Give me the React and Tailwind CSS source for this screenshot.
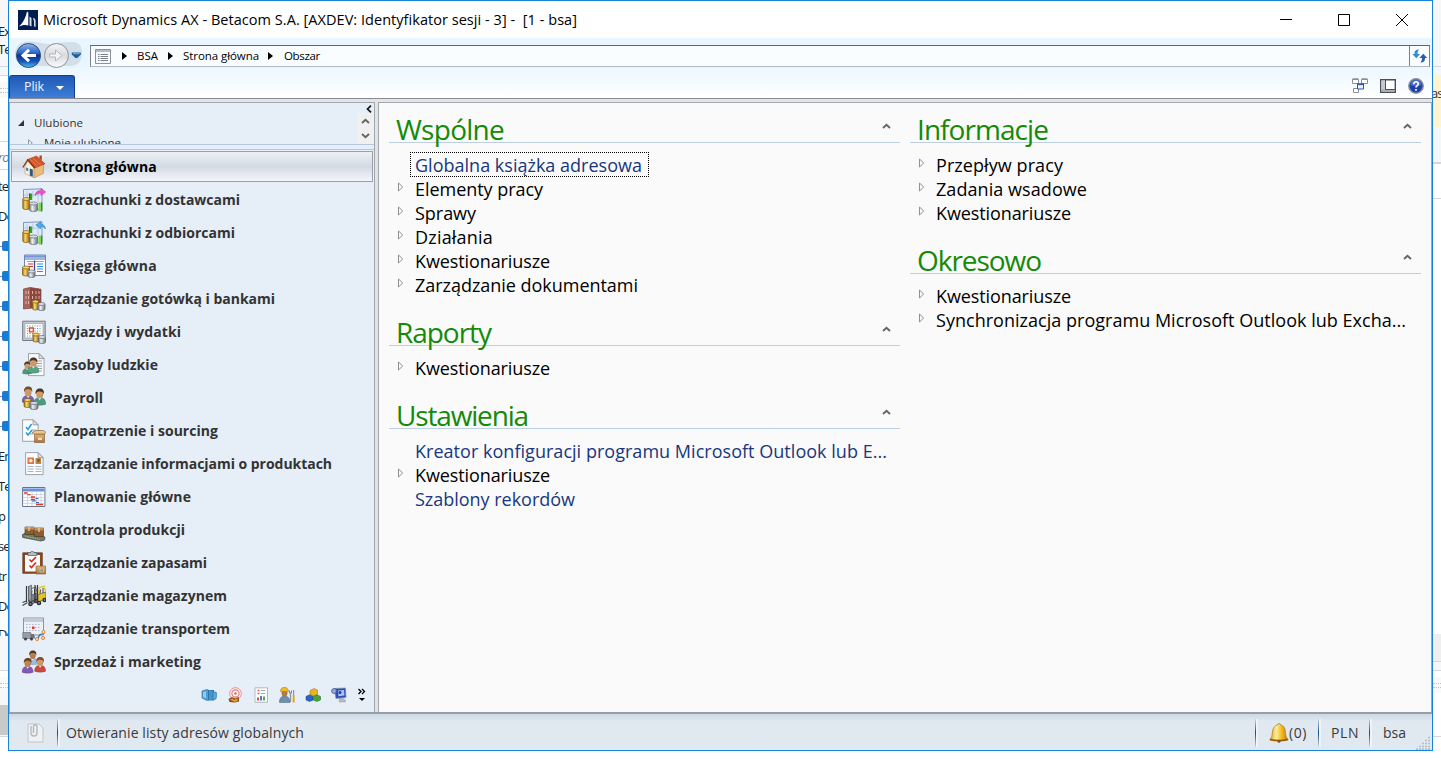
import React, { useLayoutEffect, useRef, useState } from "react";

// Text tracked so that it fills a given width.
function T({ w, className = "", children }) {
  const ref = useRef(null);
  const [ls, setLs] = useState(0);
  useLayoutEffect(() => {
    const natural = ref.current.getBoundingClientRect().width;
    setLs((w - natural) / children.length);
  }, []);
  return (
    <span ref={ref} className={"inline-block whitespace-pre " + className} style={{ letterSpacing: ls }}>
      {children}
    </span>
  );
}

/* ---------- icon parts ---------- */
function Defs() {
  return (
    <svg className="absolute h-0 w-0" aria-hidden="true">
      <defs>
        <linearGradient id="gold"><stop offset="0" stopColor="#9a6a16" /><stop offset=".35" stopColor="#fbd968" /><stop offset="1" stopColor="#94640e" /></linearGradient>
        <linearGradient id="silver"><stop offset="0" stopColor="#70757f" /><stop offset=".35" stopColor="#f0f1f5" /><stop offset="1" stopColor="#70757f" /></linearGradient>
        <linearGradient id="blueball" x2="0" y2="1"><stop offset="0" stopColor="#8fb9ee" /><stop offset=".4" stopColor="#2a62c6" /><stop offset=".5" stopColor="#0a3392" /><stop offset=".75" stopColor="#1458b8" /><stop offset="1" stopColor="#4fc0fb" /></linearGradient>
        <linearGradient id="greyball" x2="0" y2="1"><stop offset="0" stopColor="#f4f5f6" /><stop offset=".5" stopColor="#d9dcdf" /><stop offset="1" stopColor="#fbfbfb" /></linearGradient>
        <linearGradient id="box" x2="0" y2="1"><stop offset="0" stopColor="#e2b679" /><stop offset="1" stopColor="#a8733c" /></linearGradient>
        <linearGradient id="bell"><stop offset="0" stopColor="#e09a14" /><stop offset=".35" stopColor="#fff09a" /><stop offset=".65" stopColor="#f3b81f" /><stop offset="1" stopColor="#b87809" /></linearGradient>
      </defs>
    </svg>
  );
}
const Cyl = ({ x, y, w = 6, h = 8, silver }) => (
  <g stroke={silver ? "#5f6470" : "#80560e"} strokeWidth=".7">
    <path d={`M${x} ${y + 1.5}v${h - 3}a${w / 2} 1.5 0 0 0 ${w} 0v${3 - h}`} fill={silver ? "url(#silver)" : "url(#gold)"} />
    <ellipse cx={x + w / 2} cy={y + 1.5} rx={w / 2} ry="1.5" fill={silver ? "#dcdfe6" : "#f8d566"} />
  </g>
);
const Person = ({ x, y, s = 1, hair = "#4a3524", body = "#4a9a78", skin = "#cf9a6a" }) => (
  <g transform={`translate(${x} ${y}) scale(${s})`}>
    <path d="M0 14c0-4 2-6 5.500-6s5.500 2 5.500 6c-3 1.300-8 1.300-11 0z" fill={body} stroke="#00000050" strokeWidth=".5" />
    <path d="M4 8l1.500 2.500L7.300 8z" fill="#eef3f8" />
    <ellipse cx="5.500" cy="5" rx="3.100" ry="3.900" fill={skin} />
    <path d="M6.500 1.500c2 1 2.300 4.500 0 7 3-1 3-6 0-7z" fill="#00000028" />
    <path d="M1.900 5.200C1.300 1.800 3.300 0 5.700 0s4.200 1.600 3.500 5.200c-.6-2-1.400-2.600-3.500-2.600-1.900 0-3 .5-3.800 2.600z" fill={hair} />
  </g>
);
const Page = ({ x, y, w, h }) => (
  <g stroke="#8a8d94" strokeWidth=".8">
    <path d={`M${x} ${y}h${w - 5}l5 5v${h - 5}h${-w}z`} fill="#fbfcfd" />
    <path d={`M${x + w - 5} ${y}v5h5z`} fill="#dde1e6" />
  </g>
);
const Chart = ({ arrow }) => (
  <>
    <path d="M1.500 1.500L20 .8v21L1.500 19z" fill="#dfeafb" stroke="#6e8cbf" strokeWidth=".9" />
    <path d="M5 3v15M11 2.500V9M2 7h17M16 2.500V14" stroke="#a9c1e8" strokeWidth=".8" />
    <path d="M7 5.500h3.200V12H7z" fill="#3aa41e" /><path d="M7 5.500h1.200V12H7z" fill="#187008" />
    <path d="M16.500 14.500h3V23.500h-3z" fill="#7ed84a" /><path d="M19 14.500h1.300V23.500H19z" fill="#2f9314" />
    <Cyl x={0.800} y={9.500} w={6.700} h={12} /><Cyl x={7.500} y={14} w={8} h={9.500} silver />
    {arrow === "out" ? (
      <path d="M13 7.500c.5-3.500 2.500-5 6-5V.5l4.700 3.400L19 7.500V5.300c-2.500 0-4 .4-6 2.200z" fill="#f04fd0" stroke="#b328a0" strokeWidth=".5" />
    ) : (
      <path d="M23.500 8c-.5-3.500-2.500-5-5-5V.8L13.800 4l4.700 3.700V5.500c2 0 3.500.6 5 2.500z" fill="#4aaeea" stroke="#1c73b5" strokeWidth=".5" />
    )}
  </>
);
const Forklift = ({ x, y, c }) => (
  <g transform={`translate(${x} ${y})`}>
    <path d="M1 0v16M3.500 0v16" stroke="#34373c" strokeWidth="1.200" />
    <path d="M-3 19.500l5-3M-3 16.500l4-1.500" stroke="#45484e" strokeWidth="1.300" />
    <path d="M4 9.500l3-1 5-1.500v7L4 17z" fill={c} stroke="#34373c" strokeWidth=".6" />
    <path d="M4.500 8.500l.7-6 5-1.300 1.500 6" fill="none" stroke={c} strokeWidth="1.300" />
    <path d="M6 8.500l.5-4M9 3v5" stroke="#2d2f33" strokeWidth=".9" />
    <circle cx="5" cy="18" r="2.300" fill="#2d2f33" /><circle cx="5" cy="18" r=".8" fill="#b8bac0" />
    <circle cx="10.500" cy="15" r="2.200" fill="#2d2f33" /><circle cx="10.500" cy="15" r=".7" fill="#b8bac0" />
  </g>
);

const icons = {
  home: (
    <>
      <path d="M3 12L5.500 6l6.500 7v9.800L3 18.500z" fill="#faf0d9" stroke="#b08a55" strokeWidth=".5" />
      <path d="M12 12.500L21.500 8.500v9.800L12 23z" fill="#e6bd7c" stroke="#a67d42" strokeWidth=".5" />
      <path d="M5.500 4.500L14.500 1 23 8.800 12.800 13z" fill="#d5562b" stroke="#96290c" strokeWidth=".5" />
      <path d="M8 4.500l8 7M11 3.300l8 7" stroke="#ee8a5c" strokeWidth=".8" />
      <path d="M.8 12.500L5.800 4.800 12.600 13" fill="none" stroke="#8c2b10" strokeWidth="1.200" />
      <path d="M17.500.5h2.300v5l-2.300-2z" fill="#a34a2a" />
      <path d="M7.800 13.500l3 1v7.300l-3-1.400z" fill="#30567f" /><path d="M4 12.500l2.300.8v3L4 15.500z" fill="#5084b8" />
    </>
  ),
  vendors: <Chart arrow="out" />,
  customers: <Chart arrow="in" />,
  ledger: (
    <>
      <path d="M2.500 1h21v20.500h-21z" fill="#fdfdff" stroke="#6d86b8" />
      <path d="M3 1.500h20V6H3z" fill="#9fb6e0" /><path d="M3 1.500h20v1.300H3z" fill="#6f8fcd" /><path d="M5 7.500h17" stroke="#9aa7c2" />
      <path d="M12.500 6.500v14.500" stroke="#3b4b86" strokeWidth="1.300" />
      <path d="M6 10h5M6 12.500h5" stroke="#d03535" strokeWidth="1.200" />
      <path d="M15 10h6M15 12.500h6M15 15h6M15 17.500h6" stroke="#2f8ee0" strokeWidth="1.200" />
      <Cyl x={0.500} y={12} w={7} h={10} /><Cyl x={6} y={16} w={7} h={7.500} silver />
    </>
  ),
  bank: (
    <>
      <path d="M1.500 2L8 .5l11 1.700V21H11L1.500 22z" fill="#a9655a" stroke="#6c3129" strokeWidth=".6" />
      <path d="M8 .5l11 1.700V21H8z" fill="#8b463d" />
      <path d="M4 4v3M4 9v3M4 14v3M10.500 4v3M10.500 9v3M14 4v3M14 9v3M17 4v3M17 9v3M10.500 14v3M6.500 4v3M6.500 9v3M6.500 14v3" stroke="#d9b3a6" strokeWidth="1" />
      <Cyl x={10.500} y={13} w={6} h={10} /><Cyl x={16} y={15.500} w={7} h={8} silver />
    </>
  ),
  travel: (
    <>
      <path d="M.7 1.200h22.500v19.300H.7z" fill="#c3c9d1" stroke="#747a84" />
      <path d="M3 3.500h18v14.500H3z" fill="#fdfdfe" stroke="#8f96a1" strokeWidth=".6" />
      <path d="M5 6h14M5 8.500h14M5 11h14M5 13.500h14M5 16h6" stroke="#6f87a8" strokeWidth="1" strokeDasharray="1 1.500" />
      <path d="M7.500 8h3.800v3.800H7.500z" fill="#fff" stroke="#e04a1c" strokeWidth="1.300" />
      <Cyl x={11} y={13} w={6} h={9} /><Cyl x={16.500} y={15.500} w={7} h={8} silver />
    </>
  ),
  hr: (
    <>
      <Page x={6.500} y={0.600} w={15.500} h={22} />
      <path d="M14 8h6M14 10.500h6M14 13h6M15 15.500h5M15 18h5" stroke="#9ba2ab" />
      <Person x={0.500} y={8.500} s={0.850} /><Person x={5.500} y={4.500} s={1.050} body="#52a583" />
    </>
  ),
  payroll: (
    <>
      <Person x={0} y={0.500} s={1.100} hair="#7b4a27" body="#7b62b0" />
      <Person x={11.500} y={2.500} s={1.120} body="#4d9c7e" />
      <Cyl x={2} y={12.500} w={7} h={9} /><Cyl x={8} y={15.500} w={8} h={8} silver />
    </>
  ),
  sourcing: (
    <>
      <Page x={0.600} y={0.800} w={15.500} h={21.500} />
      <path d="M4 8l2 2.500 3.500-5.500M4 13.500l2 2.500 4-5" fill="none" stroke="#1f9bd8" strokeWidth="1.500" />
      <path d="M10 11h4M8 15h3" stroke="#9aa0aa" />
      <path d="M12.500 15h10v8.500h-10z" fill="url(#box)" stroke="#80562a" strokeWidth=".6" />
      <path d="M12.500 15l-2.500-1.500 4-2h7.500l2.500 2-1.500 1.500z" fill="#ecc690" stroke="#80562a" strokeWidth=".6" />
      <path d="M16 18.500h4v2.500h-4z" fill="#f1ddb9" />
    </>
  ),
  product: (
    <>
      <Page x={3.600} y={0.600} w={17.500} h={22} />
      <path d="M5.500 5.500h6.500v6.500H5.500z" fill="#e9723c" /><circle cx="8.800" cy="8.800" r="1.800" fill="#fbe9da" />
      <path d="M13.500 6h5.500v6h-5.500z" fill="#b98748" /><path d="M15.500 7h2v3h-2z" fill="#7a5224" />
      <path d="M5.500 14.500h6M13.500 14.500h6M5.500 17h6M13.500 17h6M5.500 19.500h6M13.500 19.500h6" stroke="#a9b3c6" strokeWidth="1.100" />
    </>
  ),
  planning: (
    <>
      <path d="M.6 2.500h22.300v19H.6z" fill="#fdfdff" stroke="#66748f" />
      <path d="M1 3h21.500v3.500H1z" fill="#6c92d6" /><path d="M1 3h21.500v1H1z" fill="#a9c1ea" />
      <path d="M1 9.500h21.500M1 12.500h21.500M1 15.500h21.500M1 18.500h21.500M5.500 7v14M10 7v14M14.500 7v14M19 7v14" stroke="#c3c9d4" strokeWidth=".7" />
      <path d="M2 8h3.500M5.500 9.700h3M9 12h4M9 14.500h4M14 19.500h7" stroke="#d9401f" strokeWidth="1.300" />
      <path d="M13.500 13.500h3M10 16h4M14 17.500h3" stroke="#3566c2" strokeWidth="1.200" />
    </>
  ),
  production: (
    <>
      <path d="M0 17l3-2 20 4-.5 3L19 23 .8 19.500z" fill="#6f7a67" stroke="#3c4338" strokeWidth=".7" />
      <path d="M3 18l15 3.500" stroke="#aab5a1" strokeDasharray="1.500 1" />
      <path d="M3 9h9v7.500H3z" fill="#8a5d33" stroke="#4f3216" strokeWidth=".6" /><path d="M3 9h9v2.500H3z" fill="#c69157" />
      <path d="M12.500 10h9v8.500h-9z" fill="#8a5d33" stroke="#4f3216" strokeWidth=".6" /><path d="M12.500 10h9v2.500h-9z" fill="#c69157" />
      <path d="M7 9v4M17 10v4" stroke="#efd6a8" strokeWidth="1.200" />
    </>
  ),
  inventory: (
    <>
      <path d="M.8 1.800h19.500v20.500H.8z" fill="#8d4a20" stroke="#5c2c0e" strokeWidth=".7" />
      <path d="M3 4h15v16.500H3z" fill="#fdfdfd" />
      <path d="M6 1.500h2.500C8.500 0 12 0 12 1.500h2.800V4.500H6z" fill="#b6bbc3" stroke="#555b64" strokeWidth=".7" />
      <path d="M7.500 8.500l2 2L14 6M7.500 14.500l2 2 4.500-5" fill="none" stroke="#d3291b" strokeWidth="1.600" />
      <path d="M14 15h9.500v8H14z" fill="url(#box)" stroke="#80562a" strokeWidth=".6" /><path d="M18 18h3.500v3H18z" fill="#7d8ea5" stroke="#efe2c5" strokeWidth=".5" />
    </>
  ),
  warehouse: (
    <>
      <Forklift x={3.500} y={2} c="#7d8188" /><path d="M6.500 2.500l3-1.500v14l-3 2z" fill="#9a9ea6" stroke="#3b3e44" strokeWidth=".5" />
      <Forklift x={12} y={1} c="#e6c327" />
    </>
  ),
  transport: (
    <>
      <path d="M1.500 1h20v17h-20z" fill="#eef0f5" stroke="#8b93a0" /><path d="M2 1.500h19V5H2z" fill="#c3cbd8" />
      <path d="M4 7.500h15M4 10.500h15M4 13.500h15" stroke="#a7badb" strokeDasharray="1.500 1.500" />
      <path d="M10 9.500h2.500V12H10z" fill="#e23a24" />
      <path d="M.8 15.500h8v6h-8z" fill="#9a9ea6" stroke="#5a5e66" strokeWidth=".6" /><path d="M8.800 17h3l1 2v2.500h-4z" fill="#6e737c" />
      <circle cx="3.500" cy="22" r="1.500" fill="#3c4047" /><circle cx="9.500" cy="22" r="1.500" fill="#3c4047" />
      <path d="M15 22c3 0 .5-4 3.500-4.500s4-.5 3-3.500" fill="none" stroke="#2c74c0" strokeWidth="1.300" />
      <circle cx="15" cy="22" r="1.500" fill="#f5f5f5" stroke="#e07a1d" /><circle cx="21.500" cy="15" r="1.500" fill="#f5f5f5" stroke="#e07a1d" /><circle cx="21" cy="21" r="1.500" fill="#f5f5f5" stroke="#e07a1d" />
    </>
  ),
  sales: (
    <>
      <Person x={5.500} y={0.500} s={0.950} hair="#54381f" body="#9bbbe2" skin="#b87d4b" />
      <Person x={0} y={8} s={1.020} hair="#70431f" body="#8458b4" skin="#bd8553" />
      <Person x={12.500} y={7} s={1.020} hair="#8a4b28" body="#c94a3b" />
    </>
  ),
};

const small = [
  <>
    <path d="M1 4l5-1.500 2 1v9l-2 1-5-2.500z" fill="#4fa0d4" stroke="#1f6597" strokeWidth=".6" />
    <path d="M7 3h6v10.500H7z" fill="#2878b0" /><path d="M9 3.500v9.500M11 4v9" stroke="#7fc0e6" strokeWidth=".8" />
    <path d="M12 5h3l1 2-1 5-3 1z" fill="#5aa9d8" stroke="#1f6597" strokeWidth=".5" /><path d="M2 5l3-.7v7l-3-1.300z" fill="#8fcbee" />
  </>,
  <>
    <circle cx="8.500" cy="6.500" r="5.800" fill="#fff5f3" stroke="#df9090" /><circle cx="8.500" cy="6.500" r="3.600" fill="none" stroke="#d77b7b" strokeWidth="1.100" /><circle cx="8.500" cy="6.500" r="1.200" fill="#d36565" />
    <path d="M1.500 12l3.500-2 3 1.500L12 10v4.500l-4 1-5.500-.5z" fill="#8d4f14" /><path d="M3 12.500l2.500-1L7 13l3.500-1.500V14l-3 .8z" fill="#eda43a" />
  </>,
  <>
    <path d="M2 .8h12.500v14.500H2z" fill="#fbfcfd" stroke="#a6abb3" strokeWidth=".8" />
    <path d="M4.500 3.500h2M4.500 6.500h2" stroke="#d86a6a" strokeWidth="1.300" /><path d="M8 3.500h4M8 6.500h4" stroke="#a3aab5" />
    <path d="M5 13.500v-3" stroke="#d84040" strokeWidth="1.800" /><path d="M8 13.500V9" stroke="#3b71c4" strokeWidth="1.800" /><path d="M11 13.500v-4" stroke="#3da449" strokeWidth="1.800" />
  </>,
  <>
    <path d="M.5 15.500c0-4 1.500-6.500 5-6.500s5.500 2.500 5.500 6.500z" fill="#6f8fae" stroke="#45617a" strokeWidth=".5" /><ellipse cx="5.500" cy="6" rx="3" ry="3.600" fill="#b07a4b" />
    <path d="M1.500 4.500C1.500 1.500 3 .3 5.500.3S9.300 2 9.500 4.500z" fill="#f2b920" stroke="#a47610" strokeWidth=".5" />
    <path d="M11.500 6v9" stroke="#8e949d" strokeWidth="1.400" /><path d="M14.700 8v7.500" stroke="#e9a31c" strokeWidth="2" /><path d="M10.500 3.500v2.500h2V3.500M14.700 3v5" fill="none" stroke="#7d828b" />
  </>,
  <>
    <path d="M8 7l8 3.500-6 4L1 12z" fill="#c9d0da" /><path d="M5 3.500L9 1.500l3.500 1.500v4.500L9 9 5 7.500z" fill="#eab320" stroke="#94700d" strokeWidth=".5" />
    <path d="M1 9.500l3.500-1.800L8 9.500V13l-3.500 1.500L1 13z" fill="#2b63c9" stroke="#153c85" strokeWidth=".5" />
    <path d="M8.500 9.500L12 7.700l3.500 1.800V13L12 14.500 8.500 13z" fill="#46a538" stroke="#22691a" strokeWidth=".5" />
  </>,
  <>
    <path d="M3 1.500L14.500 1l.5 9.500-10 1z" fill="#2c4cb8" stroke="#8790a8" strokeWidth=".8" /><path d="M7 3.500l6-.5.4 5.500-6 .7z" fill="#a9c4f5" />
    <path d="M8.500 11.500h3.500l3 2.500-1 1H8z" fill="#b4bac4" stroke="#888f9b" strokeWidth=".4" /><circle cx="3" cy="4" r="2.500" fill="#8fa6dc" stroke="#34478a" strokeWidth=".6" /><circle cx="9" cy="5.500" r="1.500" fill="#1f3fa5" />
  </>,
];

/* ---------- data ---------- */
const modules = [
  ["home", "Strona główna", 103],
  ["vendors", "Rozrachunki z dostawcami", 186],
  ["customers", "Rozrachunki z odbiorcami", 181],
  ["ledger", "Księga główna", 103],
  ["bank", "Zarządzanie gotówką i bankami", 221],
  ["travel", "Wyjazdy i wydatki", 127],
  ["hr", "Zasoby ludzkie", 104],
  ["payroll", "Payroll", 49],
  ["sourcing", "Zaopatrzenie i sourcing", 164],
  ["product", "Zarządzanie informacjami o produktach", 278],
  ["planning", "Planowanie główne", 137],
  ["production", "Kontrola produkcji", 131],
  ["inventory", "Zarządzanie zapasami", 153],
  ["warehouse", "Zarządzanie magazynem", 173],
  ["transport", "Zarządzanie transportem", 176],
  ["sales", "Sprzedaż i marketing", 147],
];
const leftColumn = [
  ["Wspólne", 108, [
    ["Globalna książka adresowa", 227, "focus"],
    ["Elementy pracy", 128], ["Sprawy", 61], ["Działania", 78], ["Kwestionariusze", 135], ["Zarządzanie dokumentami", 223],
  ]],
  ["Raporty", 95, [["Kwestionariusze", 135]]],
  ["Ustawienia", 132, [
    ["Kreator konfiguracji programu Microsoft Outlook lub E...", 472, "link"],
    ["Kwestionariusze", 135],
    ["Szablony rekordów", 160, "link"],
  ]],
];
const rightColumn = [
  ["Informacje", 131, [["Przepływ pracy", 127], ["Zadania wsadowe", 151], ["Kwestionariusze", 135]]],
  ["Okresowo", 124, [["Kwestionariusze", 135], ["Synchronizacja programu Microsoft Outlook lub Excha...", 470]]],
];

const Up = ({ className = "" }) => (
  <svg className={"h-[6px] w-[9px] " + className} viewBox="0 0 9 6"><path d="M1 5l3.500-3.300L8 5" fill="none" stroke="#66665f" strokeWidth="1.900" /></svg>
);

function Section({ title, w, items }) {
  return (
    <section className="mb-[10px]">
      <header className="flex h-[39px] items-start justify-between border-b border-[#bdd0e2] pl-[7px] pr-[9px]">
        <h2 className="pt-[5px] text-[28px] leading-[40px] text-[#138a08]"><T w={w}>{title}</T></h2>
        <Up className="mt-[19px]" />
      </header>
      <ul className="mt-[10px]">
        {items.map(([label, tw, kind]) => (
          <li key={label} className="flex h-6 items-center pl-[8px] text-[18px] leading-6">
            <svg className="mb-[4px] mr-[8px] h-[10px] w-[7px] shrink-0" viewBox="0 0 7 10">
              {!kind && <path d="M1.500 1v8l4.200-4z" fill="#fafafa" stroke="#909090" />}
            </svg>
            {kind === "focus" ? (
              <span className="-mt-px ml-[-2px] h-[25px] border border-dotted border-black pl-[4px] pr-[6px] text-[#17377e]"><T w={tw}>{label}</T></span>
            ) : (
              <span className={"pl-[3px] " + (kind ? "text-[#17377e]" : "text-black")}><T w={tw}>{label}</T></span>
            )}
          </li>
        ))}
      </ul>
    </section>
  );
}

/* Slivers of the window lying behind, one [height, kind, text] per row. */
const behindLeft = [
  [22, "grey"], [18, "greyText", "Ex"], [18, "greyText", "Te"], [8, "grey"], [1, "line"], [8, "grey"], [1, "line"], [6, "white"], [16, "dots"],
  [43, "white"], [1, "line"], [6, "white"], [18, "italic", "ro"], [3, "white"], [1, "line"], [7, "white"],
  [18, "text", "te"], [12, "white"], [18, "text", "Do"], [6, "white"],
  [30, "node"], [30, "node"], [30, "node"], [30, "node"], [30, "node"], [30, "node"], [30, "node"],
  [6, "white"], [18, "text", "En"], [12, "white"], [18, "text", "Te"], [12, "white"], [18, "text", "p"], [12, "white"], [18, "text", "se"],
  [12, "white"], [18, "text", "tr"], [12, "white"], [18, "text", "Do"], [14, "white"], [7, "cut", "Do"], [34, "grey"], [1, "line"], [6, "white"], [16, "dots"],
  [12, "grey"], [30, "thumb"], [1, "grey"], [1, "line"], [22, "white"],
];
const behindRight = [
  [66, "grey"], [1, "line"], [8, "grey"], [9, "cream"], [18, "creamText", "as"], [25, "cream"], [35, "grey"], [2, "line"], [34, "white"], [1, "line"], [435, "white"],
  [27, "mid"], [1, "line"], [8, "grey"], [1, "line"], [6, "white"], [16, "dots"], [43, "white"], [1, "line"], [22, "white"],
];
const tone = {
  grey: "items-center bg-[#f6f7f8]", greyText: "items-center bg-[#f8f8f8] text-[#222]", mid: "items-center bg-[#efefef]", white: "items-center bg-white",
  text: "items-center bg-white text-[#222]", cut: "items-start bg-white text-[#222]", italic: "items-center bg-white italic text-[#777]",
  line: "items-center bg-[#d4d8dc]", cream: "items-center bg-[#fff4d2]", creamText: "items-center bg-[#fff4d2] text-[#333]", dots: "items-center bg-[#f9f9f9]",
  node: "items-center bg-white", thumb: "items-center bg-[#c9c9c9]",
};
const Behind = ({ rows }) => (
  <div className="flex h-[759px] w-2 shrink-0 flex-col overflow-hidden">
    {rows.map(([h, kind, text], i) => (
      <div key={i} className={"flex w-2 shrink-0 overflow-hidden text-[13px] leading-4 tracking-[-1px] " + tone[kind]} style={{ height: h }}>
        {text && <span className={kind === "cut" ? "ml-[-2px] mt-[-3px]" : "ml-[-2px]"}>{text}</span>}
        {kind === "node" && <><i className="h-px w-[2px] bg-[#888]" /><i className="h-[10px] w-[6px] rounded-l-[2px] bg-[#1b7ad6]" /></>}
        {kind === "dots" && <i className="h-[5px] w-full border-y border-dotted border-[#c4c4c4]" />}
      </div>
    ))}
  </div>
);

const Crumb = () => <svg className="h-[8px] w-[5px]" viewBox="0 0 5 8"><path d="M0 0l5 4-5 4z" fill="#000" /></svg>;
const Sep = ({ className = "" }) => (
  <div className={"h-[28px] w-[3px] border-r-2 border-[#eef4f9] " + className}>
    <div className="h-full w-px bg-gradient-to-b from-[#c5d5e4] via-[#17497c] to-[#c5d5e4]" />
  </div>
);

export default function App() {
  return (
    <div className="flex h-[759px] w-[1441px] overflow-hidden bg-white font-['Open_Sans','Noto_Sans',sans-serif]">
      <Defs />
      <Behind rows={behindLeft} />
      <div className="flex h-[751px] w-[1425px] shrink-0 flex-col border border-[#1883d7] bg-white">
        {/* title bar */}
        <div className="flex h-[37px] items-center pl-[9px]">
          <svg className="h-5 w-5 shrink-0" viewBox="0 0 20 20">
            <path d="M0 0h20v20H0z" fill="#001d4f" />
            <path d="M1 16.500C5.500 12.500 8 7 9 1.500l1.300 1V15.500c-3-1-6.300-.5-9.300 1z" fill="#fff" />
            <path d="M11.500 6.500l2 1.500v8.500l-2-.9zM15 7.800c1.800.6 2.600 1.500 2.600 3.200v6l-1.600-.7V11.500z" fill="#d5deec" />
          </svg>
          <span className="ml-[5px] text-[14.500px] text-black"><T w={534}>Microsoft Dynamics AX - Betacom S.A. [AXDEV: Identyfikator sesji - 3] -  [1 - bsa]</T></span>
          <div className="ml-auto mr-[24px] flex items-center gap-[46px]">
            <svg className="mr-px h-[12px] w-[12px]" viewBox="0 0 12 12"><path d="M0 5.500h12" stroke="#000" /></svg>
            <svg className="ml-[-1px] mr-px h-[12px] w-[12px]" viewBox="0 0 12 12"><path d="M.5.5h11v11H.5z" fill="none" stroke="#000" /></svg>
            <svg className="ml-[-1px] h-[12px] w-[12px]" viewBox="0 0 12 12"><path d="M0 0l12 12M12 0L0 12" stroke="#000" /></svg>
          </div>
        </div>
        {/* address row */}
        <div className="flex h-[30px] items-start bg-[#e9f6ff] pr-[2px]">
          <svg className="ml-[5px] mt-[3px] h-[28px] w-[70px] shrink-0" viewBox="0 0 70 28">
            <path d="M14 .5c12 0 14 2.500 21 2.500S50 .5 58 1c8 .5 10 5 10 10 0 9-4 14-12 14H14C5 25 1 20 1 13S6 .5 14 .5z" fill="#c9d7e3" opacity=".75" />
            <circle cx="14.500" cy="14.500" r="12" fill="url(#blueball)" stroke="#334a70" />
            <path d="M15 8.800l-6 5.700 6 5.700M9.500 14.500H22" fill="none" stroke="#fff" strokeWidth="3" />
            <circle cx="42.500" cy="14.500" r="12" fill="url(#greyball)" stroke="#8d9296" />
            <path d="M35.500 13h6V9l6.500 5.500L41.500 20v-4h-6z" fill="#f3f4f5" stroke="#b4b8bb" />
            <path d="M57.800 11.500h9v2l-3.500 3.500h-2l-3.500-3.500z" fill="#1f5f9c" /><path d="M58.500 12h7.500l-1 1.300h-5.500z" fill="#5ba6d8" />
          </svg>
          <div className="ml-[6px] mt-[7px] flex h-[22px] flex-1 items-center border border-t-[#60646e] border-x-[#7d818a] border-b-[#b4b8bf] bg-[#fafdff] text-[11.500px] text-black">
            <svg className="ml-[4px] h-[15px] w-[16px]" viewBox="0 0 16 15">
              <path d="M.5.5h15v14H.5z" fill="#f7f8f9" stroke="#8a929c" /><path d="M1 1h14v2H1z" fill="#b4bcc6" />
              <path d="M3 5.500h10M3 7.500h10M3 9.500h10M3 11.500h10" stroke="#7b828b" strokeDasharray="1.500 1 8 1" />
            </svg>
            <span className="ml-[11px] flex"><Crumb /></span>
            <span className="ml-[10px]"><T w={21}>BSA</T></span>
            <span className="ml-[10px] flex"><Crumb /></span>
            <span className="ml-[10px]"><T w={76}>Strona główna</T></span>
            <span className="ml-[9px] flex"><Crumb /></span>
            <span className="ml-[11px]"><T w={36}>Obszar</T></span>
            <div className="ml-auto flex h-full w-[20px] items-center justify-center border-l border-[#7d818a]">
              <svg className="h-[14px] w-[16px]" viewBox="0 0 16 14">
                <path d="M7 .5C3.500.5 2.500 2 2.500 5H.3l4 4.300L8 5H5.500c0-2 .3-3 1.500-4.500z" fill="#2f8fd0" />
                <path d="M8.500 13.500c3.500 0 4.500-1.500 4.500-4.500h2.200l-4-4.300L7.500 9H10c0 2-.3 3-1.500 4.500z" fill="#2a5cae" />
              </svg>
            </div>
          </div>
        </div>
        {/* ribbon row */}
        <div className="flex h-[31px] items-end justify-between border-b border-[#8a8a98] bg-gradient-to-b from-[#ecf7ff] to-white">
          <div className="flex h-[23px] w-[66px] items-center rounded-t-[3px] border border-b-0 border-[#123f92] bg-gradient-to-b from-[#1f58b4] to-[#3f7fd8] pl-[14px] text-[12.500px] text-[#eef4ff]">
            <T w={20}>Plik</T>
            <svg className="ml-[12px] mt-[2px] h-[4px] w-[8px]" viewBox="0 0 8 4"><path d="M0 0h8L4 4z" fill="#fff" /></svg>
          </div>
          <div className="mb-[4px] mr-[8px] flex items-center gap-[12px]">
            <svg className="h-[16px] w-[16px]" viewBox="0 0 16 16">
              <g fill="#fff" stroke="#8c8f94"><path d="M.5 1.500h6v4h-6zM9.500 1.500h6v4h-6zM1.500 10.500h5v4h-5z" /><path d="M.5 1h6M9.500 1h6" strokeWidth="1.500" /></g>
              <path d="M5.500 6h6v5h-6z" fill="#eaf2fd" stroke="#2b57a8" /><path d="M5 6.300h7" stroke="#2b57a8" strokeWidth="1.600" />
            </svg>
            <svg className="h-[14px] w-[16px]" viewBox="0 0 16 14">
              <path d="M.7.7h14.600v12.600H.7z" fill="#fff" stroke="#4b4f55" strokeWidth="1.400" /><path d="M1.500 1.500H5v9H1.500z" fill="#c6cace" /><path d="M1.500 10h13v2.500h-13z" fill="#adb1b6" /><path d="M5.500 1v9.500H15" fill="none" stroke="#4b4f55" />
            </svg>
            <svg className="h-[16px] w-[16px]" viewBox="0 0 16 16">
              <circle cx="8" cy="8" r="7.200" fill="#1b3fae" stroke="#8b8f9a" strokeWidth="1.500" /><path d="M2.500 7a5.500 5.500 0 0 1 11 0c-3 1.500-8 1.500-11 0z" fill="#5d7fdc" opacity=".7" />
              <path d="M5.700 6.200c0-3.400 4.800-3 4.600-.2C10.200 7.700 8 7.700 8 9.600M8 11v1.800" fill="none" stroke="#fff" strokeWidth="1.700" />
            </svg>
          </div>
        </div>
        {/* body */}
        <div className="flex h-[615px] gap-[3px] border-b-2 border-[#9a9da3] bg-[#e2e4e8] pt-[3px]">
          <aside className="flex w-[366px] flex-col border border-b-0 border-[#a2a6ad] bg-[#e6eef8]">
            <div className="flex h-[42px] overflow-hidden border-b border-[#b3c8df]">
              <div className="flex-1 text-[11.500px] leading-[18px] text-[#333]">
                <div className="mt-[11px] flex items-center pl-[8px]">
                  <svg className="mr-[10px] h-[6px] w-[6px]" viewBox="0 0 6 6"><path d="M6 0v6H0z" fill="#333" /></svg>
                  <T w={49}>Ulubione</T>
                </div>
                <div className="mt-[2px] flex items-center pl-[18px]">
                  <svg className="mr-[11px] h-[8px] w-[5px]" viewBox="0 0 5 8"><path d="M.5.700v6.600L4.300 4z" fill="none" stroke="#999" /></svg>
                  <T w={77}>Moje ulubione</T>
                </div>
              </div>
              <div className="flex w-[17px] flex-col">
                <svg className="ml-[9px] mt-[2px] h-[8px] w-[6px] shrink-0" viewBox="0 0 6 8"><path d="M5 .7L1.500 4 5 7.300" fill="none" stroke="#111" strokeWidth="1.700" /></svg>
                <div className="flex h-[31px] flex-col items-center justify-between bg-[#f0f0f0] py-[5px]">
                  <Up /><Up className="rotate-180" />
                </div>
              </div>
            </div>
            <div className="h-[5px] border-b border-[#b3c8df]" />
            <nav className="px-px">
              {modules.map(([icon, label, w], i) => (
                <a key={icon} className={"flex items-center border pl-[10px] text-[14px] font-bold " + (i === 0 ? "mb-px mt-px h-[31px] border-[#9ba1a9] bg-gradient-to-b from-[#edf1f6] via-[#d3dae3] to-[#f4f6fa] text-black" : "h-[33px] border-transparent text-[#333]")}>
                  <svg className="h-6 w-6 shrink-0" viewBox="0 0 24 24">{icons[icon]}</svg>
                  <span className="ml-[8px]"><T w={w}>{label}</T></span>
                </a>
              ))}
            </nav>
            <div className="mt-[9px] flex items-center justify-end gap-[10px] pr-[8px]">
              {small.map((s, i) => <svg key={i} className="h-4 w-4" viewBox="0 0 16 16">{s}</svg>)}
              <svg className="ml-px h-[14px] w-[8px]" viewBox="0 0 8 14"><path d="M.5 1l2.500 2.500L.5 6M4 1l2.500 2.500L4 6" fill="none" stroke="#000" strokeWidth="1.300" /><path d="M1 10h6l-3 3z" fill="#000" /></svg>
            </div>
          </aside>
          <main className="flex flex-1 gap-[10px] border border-b-0 border-[#a2a6ad] bg-[#fafafa] pl-[10px] pt-px">
            <div className="w-[511px]">{leftColumn.map(([t, w, items]) => <Section key={t} title={t} w={w} items={items} />)}</div>
            <div className="w-[511px]">{rightColumn.map(([t, w, items]) => <Section key={t} title={t} w={w} items={items} />)}</div>
          </main>
        </div>
        {/* status bar */}
        <div className="flex flex-1 items-center bg-gradient-to-b from-[#cbd9e6] via-[#e0e8f0] via-20% to-[#e0e8f0] pt-px text-[14px] text-[#3a3a3a]">
          <svg className="ml-[18px] h-5 w-[17px]" viewBox="0 0 17 20">
            <path d="M1 1h11l4 4v14H1z" fill="#eff1f3" stroke="#c2c6cb" /><path d="M4 3v7c0 4 6 4 6 0V4c0-3-3.500-3-3.500 0v6" fill="none" stroke="#b5b9be" strokeWidth="1.400" />
          </svg>
          <Sep className="ml-[13px]" />
          <span className="ml-[6px]"><T w={238}>Otwieranie listy adresów globalnych</T></span>
          <Sep className="ml-auto" />
          <svg className="ml-[11px] h-5 w-5" viewBox="0 0 20 20">
            <path d="M.8 16.500c3-2.500 2-6 3-9.500C5 3 7.500 2 8.500 2c0-2 3-2 3 0 2 .3 4 1.500 4.700 5 .8 3.500 0 7 3 9.500-3 1.500-5 1.500-9.200 1.500S3 18 .8 16.500z" fill="url(#bell)" stroke="#b47a10" strokeWidth=".7" />
            <path d="M1 16.500c5 1 13 1 18 0" fill="none" stroke="#8d5a0c" strokeWidth="1.300" /><circle cx="10" cy="18.300" r="1.500" fill="#8d4f10" />
          </svg>
          <span><T w={18}>(0)</T></span>
          <Sep className="ml-[11px]" />
          <span className="ml-[10px]"><T w={28}>PLN</T></span>
          <Sep className="ml-[10px]" />
          <span className="ml-[11px]"><T w={23}>bsa</T></span>
          <svg className="ml-[10px] mr-[2px] h-[14px] w-[14px] self-end" viewBox="0 0 14 14">
            <path d="M12 1.500h2M9 4.500h2M12 4.500h2M6 7.500h2M9 7.500h2M12 7.500h2M3 10.500h2M6 10.500h2M9 10.500h2M12 10.500h2M0 13.200h2M3 13.200h2M6 13.200h2M9 13.200h2M12 13.200h2" stroke="#b5bfca" strokeWidth="1.700" />
          </svg>
        </div>
      </div>
      <Behind rows={behindRight} />
    </div>
  );
}
